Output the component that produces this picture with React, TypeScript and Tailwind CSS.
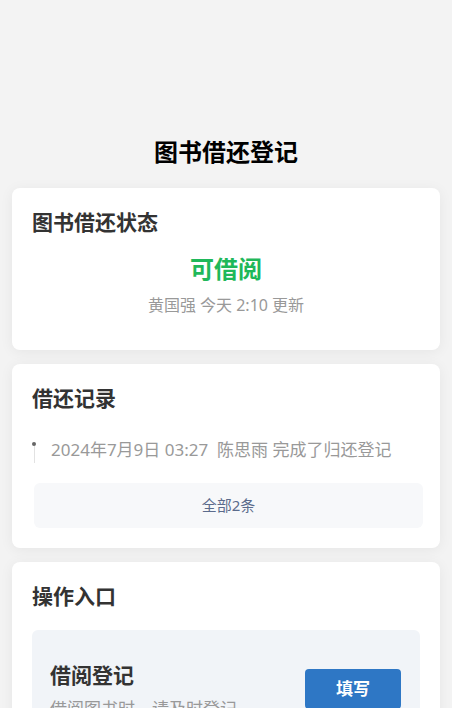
const FONT = { fontFamily: '"Noto Sans", "Noto Sans CJK SC", sans-serif' };

function Card({ children, className = '' }: { children: React.ReactNode; className?: string }) {
  return (
    <div className={`bg-white rounded-lg shadow-[0_2px_14px_rgba(0,0,0,0.06)] ${className}`}>
      {children}
    </div>
  );
}

export default function App() {
  return (
    <div className="min-h-[708px] bg-[#f3f3f3] pt-[136px] px-3" style={FONT}>
      <h1 className="text-center text-[24px] leading-8 font-bold text-black">图书借还登记</h1>

      <div className="mt-5 flex flex-col gap-[14px]">
        {/* 状态 */}
        <Card className="px-5 pt-5 pb-[33px]">
          <h2 className="text-[21px] leading-7 font-bold text-[#333]">图书借还状态</h2>
          <div className="mt-[17px] text-center text-[24px] leading-8 font-bold text-[#1fb85a]">可借阅</div>
          <div className="mt-2 text-center text-[16px] leading-6 text-[#999]">黄国强 今天 2:10 更新</div>
        </Card>

        {/* 记录 */}
        <Card className="px-5 pt-5 pb-5">
          <h2 className="text-[21px] leading-7 font-bold text-[#333]">借还记录</h2>
          <div className="mt-[26px] flex items-start gap-[15px]">
            <div className="flex flex-col items-center pt-[4px] w-[4px]">
              <span className="w-[4px] h-[4px] rounded-full bg-[#666]" />
              <span className="w-px h-[17px] bg-[#e2e2e2]" />
            </div>
            <div className="text-[17px] leading-6 text-[#999]">2024年7月9日 03:27&nbsp; 陈思雨 完成了归还登记</div>
          </div>
          <button className="mt-[20px] ml-[2px] w-[389px] h-[45px] rounded-md bg-[#f7f8fa] text-[15px] text-[#5b6b8c]">
            全部2条
          </button>
        </Card>

        {/* 操作 */}
        <Card className="px-5 pt-5 pb-5">
          <h2 className="text-[21px] leading-7 font-bold text-[#333]">操作入口</h2>
          <div className="mt-[20px] rounded-md bg-[#f1f4f8] pl-[18px] pr-[19px] pt-[31px] pb-4 flex items-start justify-between">
            <div>
              <div className="text-[21px] leading-7 font-bold text-[#333]">借阅登记</div>
              <div className="mt-[8px] text-[17px] leading-6 text-[#999]">借阅图书时，请及时登记</div>
            </div>
            <button className="mt-2 w-[96px] h-[40px] rounded bg-[#2e77c5] text-white text-[17px] font-bold">填写</button>
          </div>
        </Card>
      </div>
    </div>
  );
}
